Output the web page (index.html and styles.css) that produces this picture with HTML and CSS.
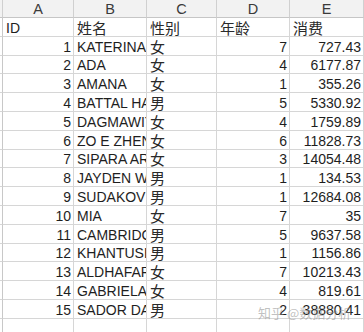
FILE: index.html
```html
<!DOCTYPE html>
<html>
<head>
<meta charset="utf-8">
<link rel="stylesheet" href="styles.css">
</head>
<body>
<div class="wrap">
<div class="sheet">
  <div class="hd stub"></div><div class="hd">A</div><div class="hd">B</div><div class="hd">C</div><div class="hd">D</div><div class="hd">E</div>

  <div class="stub"></div><div class="c">ID</div><div class="c cn">姓名</div><div class="c cn">性别</div><div class="c cn">年龄</div><div class="c cn">消费</div>

  <div class="stub"></div><div class="c r">1</div><div class="c">KATERINA</div><div class="c cn">女</div><div class="c r">7</div><div class="c r">727.43</div>
  <div class="stub"></div><div class="c r">2</div><div class="c">ADA</div><div class="c cn">女</div><div class="c r">4</div><div class="c r">6177.87</div>
  <div class="stub"></div><div class="c r">3</div><div class="c">AMANA</div><div class="c cn">女</div><div class="c r">1</div><div class="c r">355.26</div>
  <div class="stub"></div><div class="c r">4</div><div class="c">BATTAL HAMID</div><div class="c cn">男</div><div class="c r">5</div><div class="c r">5330.92</div>
  <div class="stub"></div><div class="c r">5</div><div class="c">DAGMAWIT</div><div class="c cn">女</div><div class="c r">4</div><div class="c r">1759.89</div>
  <div class="stub"></div><div class="c r">6</div><div class="c">ZO E ZHENG</div><div class="c cn">女</div><div class="c r">6</div><div class="c r">11828.73</div>
  <div class="stub"></div><div class="c r">7</div><div class="c">SIPARA ARI</div><div class="c cn">女</div><div class="c r">3</div><div class="c r">14054.48</div>
  <div class="stub"></div><div class="c r">8</div><div class="c">JAYDEN W</div><div class="c cn">男</div><div class="c r">1</div><div class="c r">134.53</div>
  <div class="stub"></div><div class="c r">9</div><div class="c">SUDAKOV</div><div class="c cn">男</div><div class="c r">1</div><div class="c r">12684.08</div>
  <div class="stub"></div><div class="c r">10</div><div class="c">MIA</div><div class="c cn">女</div><div class="c r">7</div><div class="c r">35</div>
  <div class="stub"></div><div class="c r">11</div><div class="c">CAMBRIDGE</div><div class="c cn">男</div><div class="c r">5</div><div class="c r">9637.58</div>
  <div class="stub"></div><div class="c r">12</div><div class="c">KHANTUSHI</div><div class="c cn">男</div><div class="c r">1</div><div class="c r">1156.86</div>
  <div class="stub"></div><div class="c r">13</div><div class="c">ALDHAFARI</div><div class="c cn">女</div><div class="c r">7</div><div class="c r">10213.43</div>
  <div class="stub"></div><div class="c r">14</div><div class="c">GABRIELA</div><div class="c cn">女</div><div class="c r">4</div><div class="c r">819.61</div>
  <div class="stub"></div><div class="c r">15</div><div class="c">SADOR DAN</div><div class="c cn">男</div><div class="c r">2</div><div class="c r">38880.41</div>

  <div class="stub"></div><div class="c"></div><div class="c"></div><div class="c"></div><div class="c"></div><div class="c"></div>
</div>
<div class="watermark">知乎 @数据分析</div>
</div>
</body>
</html>
```

FILE: styles.css
```css
html, body {
  margin: 0;
  padding: 0;
  background: #ffffff;
}

.wrap {
  position: relative;
  width: 364px;
  height: 332px;
  overflow: hidden;
}

.sheet {
  display: grid;
  grid-template-columns: 3px 71px 73px 70px 73px 74px;
  grid-template-rows: 18px repeat(17, 18.8px);
  font-family: "Liberation Sans", "Noto Sans CJK SC", sans-serif;
  font-size: 14px;
  color: #1e1e1e;
}

.sheet > div {
  box-sizing: border-box;
  border-right: 1px solid #d6d6d6;
  border-bottom: 1px solid #d6d6d6;
  overflow: hidden;
  white-space: nowrap;
  display: flex;
  align-items: flex-end;
  padding: 0 2px 0 3px;
  line-height: 16px;
}

.sheet > .stub {
  padding: 0;
  border-right-color: #c8c8c8;
}

.sheet > .hd {
  background: #f2f2f2;
  color: #3a3a3a;
  justify-content: center;
  align-items: center;
  padding: 0;
  font-size: 14.5px;
  border-right-color: #d0d0d0;
  border-bottom-color: #c6c6c6;
}

.sheet > .r {
  justify-content: flex-end;
}

.sheet > .cn {
  font-family: "Noto Sans CJK SC", sans-serif;
  font-size: 15px;
  line-height: 17px;
  color: #2a2a2a;
}

.watermark {
  position: absolute;
  left: 258px;
  top: 303px;
  font-family: "Noto Sans CJK SC", sans-serif;
  font-size: 13px;
  color: rgba(140, 140, 140, 0.55);
  white-space: nowrap;
}
```
